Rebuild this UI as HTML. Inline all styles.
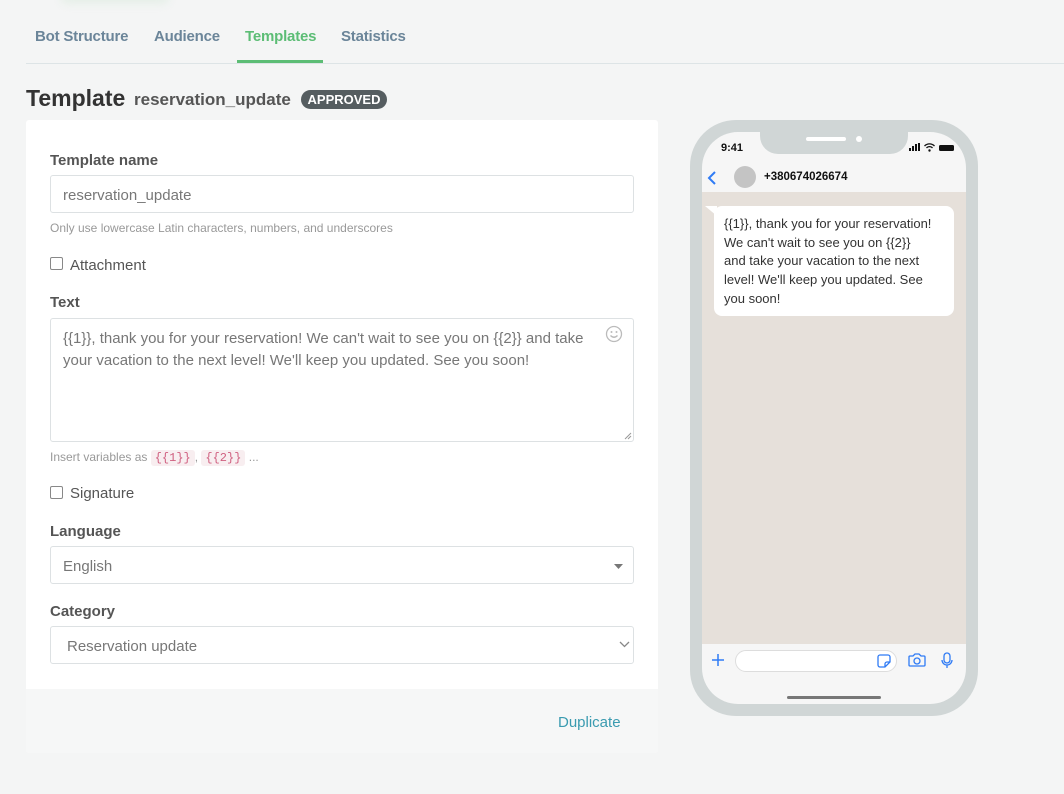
<!DOCTYPE html>
<html><head><meta charset="utf-8"><style>
*{box-sizing:border-box;margin:0;padding:0}
body{width:1064px;height:794px;background:#f4f5f5;font-family:"Liberation Sans",sans-serif;position:relative;overflow:hidden;color:#333}
.abs{position:absolute}
.tab{position:absolute;top:28px;font-size:15px;font-weight:bold;color:#6b8599;letter-spacing:-0.2px}
.lbl{position:absolute;left:50px;font-size:15px;font-weight:bold;color:#555}
.inp{position:absolute;left:50px;width:584px;height:38px;border:1px solid #dde1e3;border-radius:3px;background:#fff;font-size:15px;color:#777;padding:11px 12px}
.cb{position:absolute;left:50px;width:13px;height:13px;border:1px solid #888;border-radius:2px;background:#fff}
.cbl{position:absolute;left:70px;font-size:15px;color:#555}
.code{background:#f8eef0;color:#d06080;font-family:"Liberation Mono",monospace;font-size:12px;padding:1px 4px;border-radius:3px}
</style></head><body>
<div class="abs" style="left:60px;top:-12px;width:110px;height:16px;border-radius:8px;background:#e6efe8;filter:blur(4px)"></div>
<div class="tab" style="left:35px">Bot Structure</div>
<div class="tab" style="left:154px">Audience</div>
<div class="tab" style="left:245px;color:#5cbd75">Templates</div>
<div class="tab" style="left:341px">Statistics</div>
<div class="abs" style="left:26px;top:63px;width:1038px;height:1px;background:#dde4e6"></div>
<div class="abs" style="left:237px;top:60px;width:86px;height:3px;background:#5cbd75"></div>
<div class="abs" style="left:26px;top:85px;font-size:23px;font-weight:bold;color:#333">Template</div>
<div class="abs" style="left:134px;top:90px;font-size:17px;font-weight:bold;color:#555">reservation_update</div>
<div class="abs" style="left:301px;top:90px;width:86px;height:19px;border-radius:10px;background:#555d60;color:#fff;font-size:13px;font-weight:bold;text-align:center;line-height:19px">APPROVED</div>

<div class="abs" style="left:26px;top:120px;width:632px;height:633px;background:#fff;border-radius:3px"></div>
<div class="abs" style="left:26px;top:689px;width:632px;height:64px;background:#f6f7f7;border-radius:0 0 3px 3px"></div>
<div class="abs" style="left:558px;top:714px;font-size:15px;color:#3a9bb0">Duplicate</div>

<div class="lbl" style="top:152px">Template name</div>
<div class="inp" style="top:175px">reservation_update</div>
<div class="abs" style="left:50px;top:221px;font-size:12px;color:#999">Only use lowercase Latin characters, numbers, and underscores</div>
<div class="cb" style="top:257px"></div><div class="cbl" style="top:257px">Attachment</div>
<div class="lbl" style="top:294px">Text</div>
<div class="inp" style="top:318px;height:124px;line-height:22px;padding:9px 44px 8px 12px;font-size:15px">{{1}}, thank you for your reservation! We can't wait to see you on {{2}} and take your vacation to the next level! We'll keep you updated. See you soon!</div>
<svg class="abs" style="left:605px;top:325px" width="18" height="18" viewBox="0 0 18 18"><circle cx="9" cy="9" r="7.5" fill="none" stroke="#bbb" stroke-width="1.3"/><circle cx="6.5" cy="7" r="1" fill="#bbb"/><circle cx="11.5" cy="7" r="1" fill="#bbb"/><path d="M5.5 10.5q3.5 3.5 7 0" fill="none" stroke="#bbb" stroke-width="1.3"/></svg>
<svg class="abs" style="left:624px;top:432px" width="8" height="8"><path d="M1 7L7 1M4 7L7 4" stroke="#999" stroke-width="1"/></svg>
<div class="abs" style="left:50px;top:450px;font-size:12px;color:#999">Insert variables as <span class="code">{{1}}</span>, <span class="code">{{2}}</span> ...</div>
<div class="cb" style="top:486px"></div><div class="cbl" style="top:485px">Signature</div>
<div class="lbl" style="top:523px">Language</div>
<div class="inp" style="top:546px">English</div>
<svg class="abs" style="left:614px;top:564px" width="10" height="6"><path d="M0 0h9L4.5 5z" fill="#777"/></svg>
<div class="lbl" style="top:603px">Category</div>
<div class="inp" style="top:626px;padding-left:16px">Reservation update</div>
<svg class="abs" style="left:619px;top:641px" width="11" height="7"><path d="M1 1l4.5 4.5L10 1" fill="none" stroke="#888" stroke-width="1.3"/></svg>

<!-- phone -->
<div class="abs" style="left:690px;top:120px;width:288px;height:596px;border-radius:46px;background:#d0d6d6"></div>
<div class="abs" style="left:702px;top:132px;width:264px;height:572px;border-radius:36px;background:#f6f6f6;overflow:hidden">
 <div class="abs" style="left:0;top:60px;width:264px;height:452px;background:#e6e0da"></div>
 <div class="abs" style="left:58px;top:-2px;width:148px;height:24px;background:#d0d6d6;border-radius:0 0 18px 18px"></div>
 <div class="abs" style="left:104px;top:5px;width:40px;height:4px;background:#fff;border-radius:2px"></div>
 <div class="abs" style="left:154px;top:4px;width:6px;height:6px;background:#fff;border-radius:3px"></div>
 <div class="abs" style="left:19px;top:10px;font-size:11px;font-weight:bold;color:#111">9:41</div>
 <div class="abs" style="left:207px;top:16px;width:2px;height:3px;background:#111"></div>
 <div class="abs" style="left:210px;top:14px;width:2px;height:5px;background:#111"></div>
 <div class="abs" style="left:213px;top:12px;width:2px;height:7px;background:#111"></div>
 <div class="abs" style="left:216px;top:11px;width:2px;height:8px;background:#111"></div>
 <svg class="abs" style="left:222px;top:11px" width="11" height="9"><path d="M0.5 3a7 7 0 0 1 10 0M2.5 5a4 4 0 0 1 6 0" fill="none" stroke="#111" stroke-width="1.3"/><circle cx="5.5" cy="7.5" r="1.2" fill="#111"/></svg>
 <div class="abs" style="left:237px;top:13px;width:15px;height:6px;background:#111;border-radius:1.5px"></div>
 <svg class="abs" style="left:5px;top:38px" width="10" height="16"><path d="M8 2L2 8l6 6" fill="none" stroke="#2f7bf5" stroke-width="2"/></svg>
 <div class="abs" style="left:32px;top:34px;width:22px;height:22px;border-radius:11px;background:#c4c4c4"></div>
 <div class="abs" style="left:62px;top:39px;font-size:11.5px;font-weight:bold;color:#111">+380674026674</div>
 <div class="abs" style="left:12px;top:74px;width:240px;height:110px;background:#fff;border-radius:8px;padding:9px 4px 10px 10px;font-size:13px;line-height:18.7px;color:#333;white-space:nowrap">{{1}}, thank you for your reservation!<br>We can't wait to see you on {{2}}<br>and take your vacation to the next<br>level! We'll keep you updated. See<br>you soon!</div>
 <svg class="abs" style="left:3px;top:74px" width="12" height="10"><path d="M0 0h12v10z" fill="#fff"/></svg>
 <svg class="abs" style="left:9px;top:521px" width="14" height="14"><path d="M7 1v12M1 7h12" stroke="#2f7bf5" stroke-width="1.5"/></svg>
 <div class="abs" style="left:33px;top:518px;width:162px;height:22px;border:1px solid #ddd;border-radius:11px;background:#fff"></div>
 <svg class="abs" style="left:175px;top:522px" width="14" height="14"><path d="M3 1h8a2 2 0 0 1 2 2v5l-5 5H3a2 2 0 0 1-2-2V3a2 2 0 0 1 2-2zM13 8h-3a2 2 0 0 0-2 2v3" fill="none" stroke="#2f7bf5" stroke-width="1.3"/></svg>
 <svg class="abs" style="left:206px;top:521px" width="18" height="15"><path d="M2 3h3l2-2h4l2 2h3a1 1 0 0 1 1 1v8a1 1 0 0 1-1 1H2a1 1 0 0 1-1-1V4a1 1 0 0 1 1-1z" fill="none" stroke="#2f7bf5" stroke-width="1.3"/><circle cx="9" cy="8" r="3" fill="none" stroke="#2f7bf5" stroke-width="1.3"/></svg>
 <svg class="abs" style="left:239px;top:520px" width="12" height="17"><rect x="3" y="1" width="6" height="10" rx="3" fill="none" stroke="#2f7bf5" stroke-width="1.3"/><path d="M1 8a5 5 0 0 0 10 0M6 13v3" fill="none" stroke="#2f7bf5" stroke-width="1.3"/></svg>
 <div class="abs" style="left:85px;top:564px;width:94px;height:3px;background:#777;border-radius:2px"></div>
</div>
</body></html>
